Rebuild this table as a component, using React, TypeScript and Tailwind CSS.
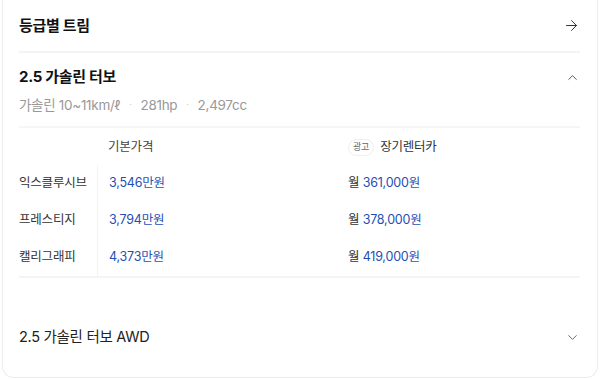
import { ArrowRight, ChevronDown, ChevronUp } from "lucide-react";

const TRIMS = [
  { name: "익스클루시브", price: "3,546만원", rent: "361,000원" },
  { name: "프레스티지", price: "3,794만원", rent: "378,000원" },
  { name: "캘리그래피", price: "4,373만원", rent: "419,000원" },
];

export default function App() {
  return (
    <main
      className="min-h-[379px] bg-white px-[2px] pb-[2px] text-[#111]"
      style={{ fontFamily: 'Inter, "Noto Sans CJK KR", sans-serif' }}
    >
      <section className="rounded-b-[12px] border-x border-b border-[#ececec] px-4 pr-[17px]">
        <header className="flex h-[53px] items-center justify-between border-b-2 border-[#f4f4f4]">
          <h2 className="pt-[2px] text-[15px] font-bold tracking-[-0.3px]">등급별 트림</h2>
          <ArrowRight className="h-[17px] w-[17px] text-[#333]" strokeWidth={1.4} />
        </header>

        <div className="border-b-2 border-[#f6f6f6] pb-[11px] pt-[14px]">
          <div className="flex h-[20px] items-center justify-between">
            <h3 className="text-[15px] font-bold tracking-[-0.3px]">2.5 가솔린 터보</h3>
            <ChevronUp className="h-[15px] w-[15px] text-[#444]" strokeWidth={1.4} />
          </div>
          <p className="mt-[8px] flex h-[20px] items-center text-[13.5px] tracking-[-0.3px] text-[#999]">
            가솔린 10~11km/ℓ
            <span className="mx-[9px] text-[9px] text-[#ccc]">·</span>
            281hp
            <span className="mx-[9px] text-[9px] text-[#ccc]">·</span>
            2,497cc
          </p>
        </div>

        <div className="border-b-2 border-[#f4f4f4] pt-[1px] text-[12.5px] tracking-[-0.2px]">
          <div className="grid h-[36px] grid-cols-[78px_251px_1fr] items-center">
            <span />
            <span className="pl-[11px] text-[#444]">기본가격</span>
            <span className="flex items-center gap-[6px] text-[#333]">
              <span className="flex h-[17px] items-center rounded-full border border-[#eee] px-[4px] text-[9px] text-[#666]">
                광고
              </span>
              장기렌터카
            </span>
          </div>
          {TRIMS.map((t) => (
            <div key={t.name} className="grid h-[37px] grid-cols-[78px_251px_1fr] items-center">
              <span className="text-[#333]">{t.name}</span>
              <span className="flex h-full items-center border-l border-[#f3f3f3] pl-[11px] text-[#1f4fb5]">
                {t.price}
              </span>
              <span className="text-[#333]">
                월 <span className="text-[#1f4fb5]">{t.rent}</span>
              </span>
            </div>
          ))}
        </div>

        <div className="flex h-[99px] items-center justify-between pt-[19px]">
          <h3 className="text-[14.5px] tracking-[-0.3px] text-[#222]">2.5 가솔린 터보 AWD</h3>
          <ChevronDown className="h-[15px] w-[15px] text-[#555]" strokeWidth={1.4} />
        </div>
      </section>
    </main>
  );
}
